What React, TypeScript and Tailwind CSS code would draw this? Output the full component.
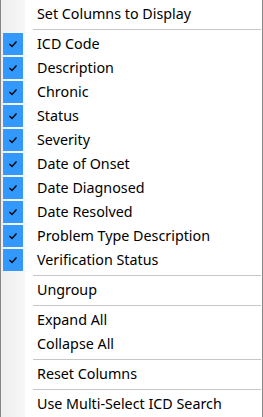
const checked = [
  'ICD Code',
  'Description',
  'Chronic',
  'Status',
  'Severity',
  'Date of Onset',
  'Date Diagnosed',
  'Date Resolved',
  'Problem Type Description',
  'Verification Status',
];

const Check = () => (
  <svg width="10" height="8" viewBox="0 0 10 8">
    <polyline points="1.5,4 4,6.5 8.5,1.5" fill="none" stroke="#000" strokeWidth="1.3" />
  </svg>
);

const Item = ({ label, on }: { label: string; on?: boolean }) => (
  <div className="flex h-6 items-center">
    <div className="w-6 h-full flex items-center">
      {on && (
        <div className="ml-[2px] w-5 h-[22px] bg-[#3399ff] flex items-center justify-center">
          <Check />
        </div>
      )}
    </div>
    <span className="pl-3 text-black whitespace-nowrap">{label}</span>
  </div>
);

const Sep = () => (
  <div className="h-[6px] flex items-center pl-[32px] pr-[1px]">
    <div className="h-px w-full bg-[#c6c6c6]" />
  </div>
);

export default function App() {
  return (
    <div
      className="w-[263px] h-[417px] border-x border-[#858585] pt-[2px] text-[14.3px] bg-[linear-gradient(to_right,#eeeeee,#f7f7f7_24px,#ffffff_24px)]"
      style={{ fontFamily: '"Noto Sans", sans-serif' }}
    >
      <Item label="Set Columns to Display" />
      <Sep />
      {checked.map((c) => (
        <Item key={c} label={c} on />
      ))}
      <Sep />
      <Item label="Ungroup" />
      <Sep />
      <Item label="Expand All" />
      <Item label="Collapse All" />
      <Sep />
      <Item label="Reset Columns" />
      <Sep />
      <Item label="Use Multi-Select ICD Search" />
    </div>
  );
}
